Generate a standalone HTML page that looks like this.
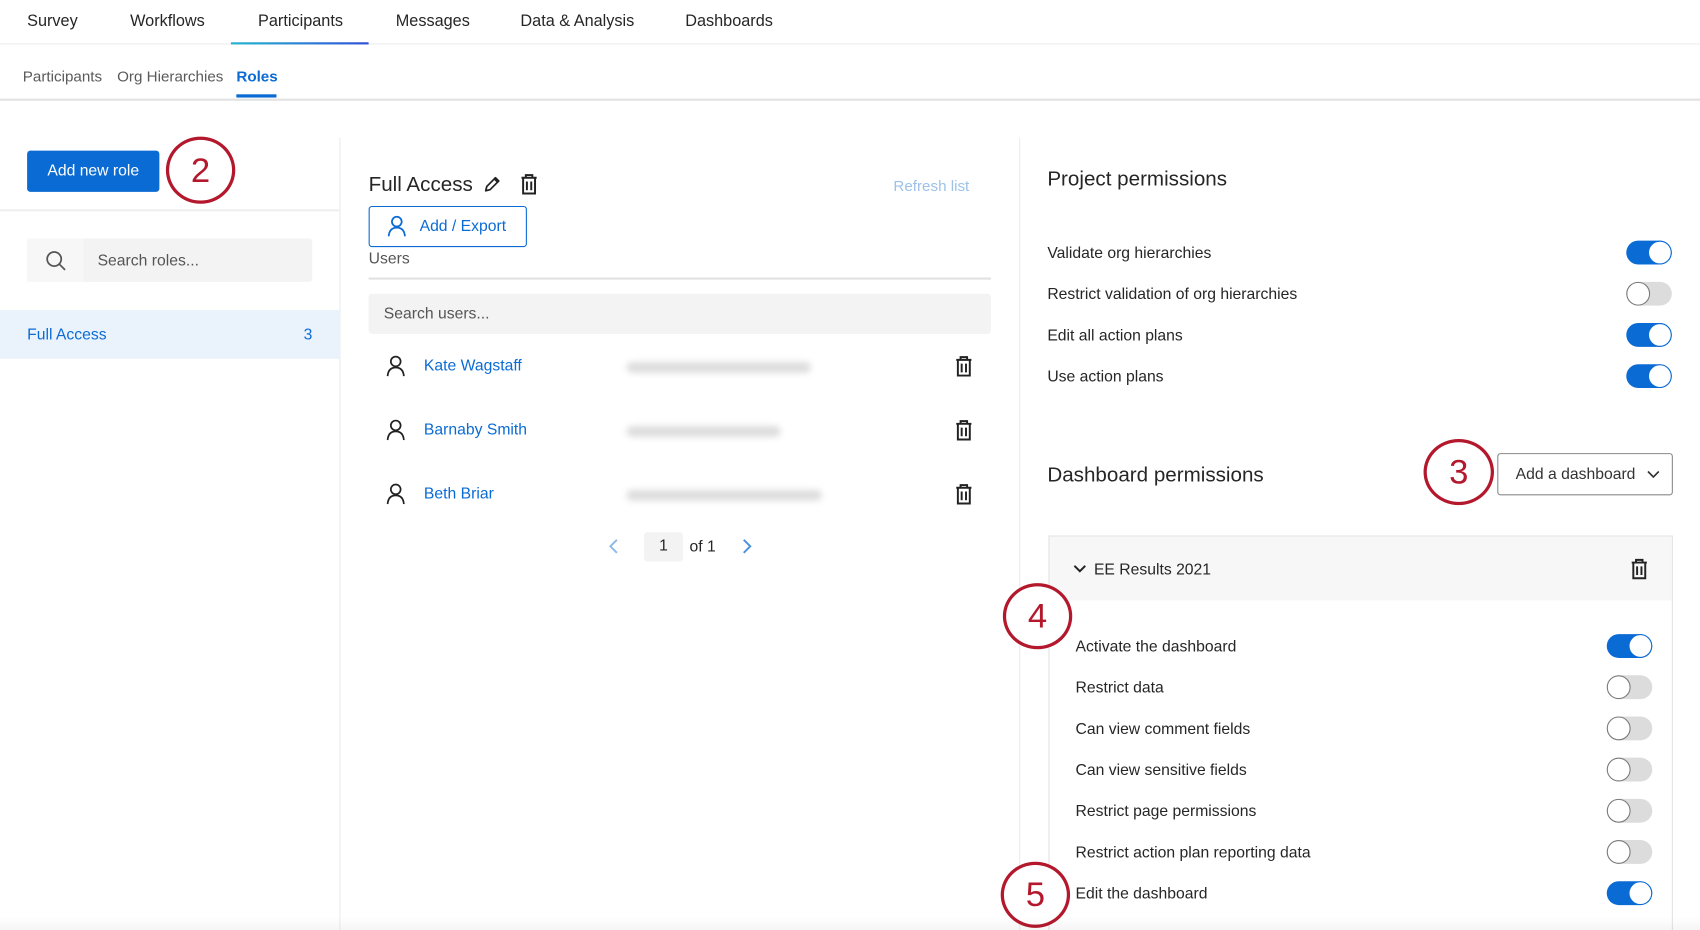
<!DOCTYPE html>
<html><head><meta charset="utf-8"><style>
*{margin:0;padding:0;box-sizing:border-box}
html,body{width:1700px;height:930px;overflow:hidden;background:#fff}
#w{position:absolute;left:0;top:0;width:1568px;height:858px;overflow:hidden;transform:scale(1.08418,1.08392);transform-origin:0 0;font-family:"Liberation Sans",sans-serif;color:#262626;font-size:15px}
.a{position:absolute;white-space:nowrap}
.nav{top:11px;font-size:15px;color:#262626}
.sub{top:62px;font-size:14px;color:#5a5a5a}
.tg{position:absolute;width:42px;height:22px;border-radius:11px;background:#dcdcdc}
.tg::after{content:"";position:absolute;top:0;left:0;width:22px;height:22px;border-radius:50%;background:#fff;border:1.5px solid #7a7a7a;box-sizing:border-box}
.tg.on{background:#0b6bd4}
.tg.on::after{left:20px;border-color:#0b6bd4}
.lbl{font-size:14.5px;color:#262626;margin-top:1px}
.circ{position:absolute;border:3px solid #b3182c;border-radius:50%;color:#b3182c;font-size:32px;text-align:center;background:#fff}
.blue{color:#0b6bd4}
.blur{position:absolute;height:10px;border-radius:5px;background:#ddd;filter:blur(3px)}
</style></head><body><div id="w">
<div class="a nav" style="left:25px">Survey</div>
<div class="a nav" style="left:120px">Workflows</div>
<div class="a nav" style="left:238px">Participants</div>
<div class="a nav" style="left:365px">Messages</div>
<div class="a nav" style="left:480px">Data &amp; Analysis</div>
<div class="a nav" style="left:632px">Dashboards</div>
<div class="a" style="left:0;top:40px;width:1568px;height:1px;background:#ececec"></div>
<div class="a" style="left:213px;top:39px;width:127px;height:2px;background:linear-gradient(90deg,#22b5d0,#2f4fd8)"></div>
<div class="a sub" style="left:21px">Participants</div>
<div class="a sub" style="left:108px">Org Hierarchies</div>
<div class="a sub" style="left:218px;color:#0b6bd4;font-weight:bold">Roles</div>
<div class="a" style="left:218px;top:87px;width:37px;height:3px;background:#0b6bd4"></div>
<div class="a" style="left:0;top:91px;width:1568px;height:2px;background:#e2e2e2"></div>

<!-- left -->
<div class="a" style="left:313px;top:127px;width:1px;height:731px;background:#ececec"></div>
<div class="a" style="left:25px;top:139px;width:122px;height:38px;background:#0b6bd4;border-radius:3px;color:#fff;font-size:14.5px;line-height:38px;text-align:center">Add new role</div>
<div class="circ" style="left:153px;top:126px;width:64px;height:62px;line-height:56px">2</div>
<div class="a" style="left:0;top:193px;width:313px;height:2px;background:#efefef"></div>
<div class="a" style="left:25px;top:220px;width:263px;height:40px;background:#f3f3f3;border-radius:3px"></div>
<div class="a" style="left:25px;top:220px;width:52px;height:40px;background:#f7f7f7"></div>
<svg class="a" style="left:41px;top:230px" width="22" height="22" viewBox="0 0 22 22"><circle cx="9" cy="9" r="6.5" fill="none" stroke="#555" stroke-width="1.6"/><line x1="13.5" y1="13.5" x2="19" y2="19" stroke="#555" stroke-width="1.6"/></svg>
<div class="a" style="left:90px;top:233px;color:#555;font-size:14.5px">Search roles...</div>
<div class="a" style="left:0;top:286px;width:313px;height:45px;background:#eaf3fc"></div>
<div class="a blue" style="left:25px;top:301px;font-size:14.5px">Full Access</div>
<div class="a blue" style="left:280px;top:301px;font-size:14.5px">3</div>

<!-- middle -->
<div class="a" style="left:340px;top:160px;font-size:19px">Full Access</div>
<svg class="a" style="left:445px;top:161px" width="18" height="18" viewBox="0 0 18 18"><path d="M3 15 L4 11 L12 3 L15 6 L7 14 Z M11 4 L14 7" fill="none" stroke="#222" stroke-width="1.6" stroke-linejoin="round"/></svg>
<svg class="a" style="left:479px;top:159px" width="18" height="22" viewBox="0 0 18 22"><path d="M2 5 H16 M6 5 V2.5 H12 V5 M3.5 5 V19.5 H14.5 V5 M7 8.5 V16.5 M11 8.5 V16.5" fill="none" stroke="#222" stroke-width="1.8"/></svg>
<div class="a" style="left:824px;top:163px;color:#9cc2ea;font-size:14px">Refresh list</div>
<div class="a" style="left:340px;top:190px;width:146px;height:38px;border:1.5px solid #0b6bd4;border-radius:3px"></div>
<svg class="a" style="left:356px;top:198px" width="20" height="22" viewBox="0 0 20 22"><circle cx="10" cy="6.5" r="4.5" fill="none" stroke="#0b6bd4" stroke-width="1.6"/><path d="M2.5 20 C3 14 6 12 10 12 C14 12 17 14 17.5 20" fill="none" stroke="#0b6bd4" stroke-width="1.6"/></svg>
<div class="a blue" style="left:387px;top:201px;font-size:14.5px">Add / Export</div>
<div class="a" style="left:340px;top:231px;color:#555;font-size:14.5px">Users</div>
<div class="a" style="left:340px;top:256px;width:574px;height:2px;background:#e2e2e2"></div>
<div class="a" style="left:340px;top:271px;width:574px;height:37px;background:#f3f3f3;border-radius:3px"></div>
<div class="a" style="left:354px;top:282px;color:#555;font-size:14.5px">Search users...</div>

<svg class="a" style="left:355px;top:327px" width="20" height="22" viewBox="0 0 20 22"><circle cx="10" cy="6.5" r="4.5" fill="none" stroke="#222" stroke-width="1.6"/><path d="M2.5 20 C3 14 6 12 10 12 C14 12 17 14 17.5 20" fill="none" stroke="#222" stroke-width="1.6"/></svg>
<div class="a blue" style="left:391px;top:330px;font-size:14.5px">Kate Wagstaff</div>
<div class="blur" style="left:578px;top:334px;width:170px"></div>
<svg class="a" style="left:880px;top:327px" width="18" height="22" viewBox="0 0 18 22"><path d="M2 5 H16 M6 5 V2.5 H12 V5 M3.5 5 V19.5 H14.5 V5 M7 8.5 V16.5 M11 8.5 V16.5" fill="none" stroke="#222" stroke-width="1.8"/></svg>

<svg class="a" style="left:355px;top:386px" width="20" height="22" viewBox="0 0 20 22"><circle cx="10" cy="6.5" r="4.5" fill="none" stroke="#222" stroke-width="1.6"/><path d="M2.5 20 C3 14 6 12 10 12 C14 12 17 14 17.5 20" fill="none" stroke="#222" stroke-width="1.6"/></svg>
<div class="a blue" style="left:391px;top:389px;font-size:14.5px">Barnaby Smith</div>
<div class="blur" style="left:578px;top:393px;width:142px"></div>
<svg class="a" style="left:880px;top:386px" width="18" height="22" viewBox="0 0 18 22"><path d="M2 5 H16 M6 5 V2.5 H12 V5 M3.5 5 V19.5 H14.5 V5 M7 8.5 V16.5 M11 8.5 V16.5" fill="none" stroke="#222" stroke-width="1.8"/></svg>

<svg class="a" style="left:355px;top:445px" width="20" height="22" viewBox="0 0 20 22"><circle cx="10" cy="6.5" r="4.5" fill="none" stroke="#222" stroke-width="1.6"/><path d="M2.5 20 C3 14 6 12 10 12 C14 12 17 14 17.5 20" fill="none" stroke="#222" stroke-width="1.6"/></svg>
<div class="a blue" style="left:391px;top:448px;font-size:14.5px">Beth Briar</div>
<div class="blur" style="left:578px;top:452px;width:180px"></div>
<svg class="a" style="left:880px;top:445px" width="18" height="22" viewBox="0 0 18 22"><path d="M2 5 H16 M6 5 V2.5 H12 V5 M3.5 5 V19.5 H14.5 V5 M7 8.5 V16.5 M11 8.5 V16.5" fill="none" stroke="#222" stroke-width="1.8"/></svg>

<svg class="a" style="left:559px;top:496px" width="14" height="16" viewBox="0 0 14 16"><path d="M10 2 L4 8 L10 14" fill="none" stroke="#8db9e8" stroke-width="1.8"/></svg>
<div class="a" style="left:594px;top:491px;width:36px;height:27px;background:#f3f3f3;border-radius:3px;text-align:center;line-height:27px;font-size:14.5px">1</div>
<div class="a" style="left:636px;top:497px;font-size:14.5px">of 1</div>
<svg class="a" style="left:682px;top:496px" width="14" height="16" viewBox="0 0 14 16"><path d="M4 2 L10 8 L4 14" fill="none" stroke="#4b91de" stroke-width="1.8"/></svg>

<!-- right -->
<div class="a" style="left:940px;top:127px;width:1px;height:731px;background:#ececec"></div>
<div class="a" style="left:966px;top:155px;font-size:19px">Project permissions</div>
<div class="a lbl" style="left:966px;top:225px">Validate org hierarchies</div><div class="tg on" style="left:1500px;top:222px"></div>
<div class="a lbl" style="left:966px;top:263px">Restrict validation of org hierarchies</div><div class="tg" style="left:1500px;top:260px"></div>
<div class="a lbl" style="left:966px;top:301px">Edit all action plans</div><div class="tg on" style="left:1500px;top:298px"></div>
<div class="a lbl" style="left:966px;top:339px">Use action plans</div><div class="tg on" style="left:1500px;top:336px"></div>

<div class="a" style="left:966px;top:428px;font-size:19px">Dashboard permissions</div>
<div class="circ" style="left:1313px;top:405px;width:65px;height:61px;line-height:55px">3</div>
<div class="a" style="left:1381px;top:418px;width:162px;height:39px;border:1px solid #8a8a8a;border-radius:3px"></div>
<div class="a" style="left:1398px;top:430px;font-size:14.5px;color:#333">Add a dashboard</div>
<svg class="a" style="left:1518px;top:432px" width="14" height="12" viewBox="0 0 14 12"><path d="M2 3 L7 8 L12 3" fill="none" stroke="#333" stroke-width="1.5"/></svg>

<div class="a" style="left:967px;top:494px;width:576px;height:380px;border:1px solid #e3e3e3"></div>
<div class="a" style="left:968px;top:495px;width:574px;height:59px;background:#f7f7f7"></div>
<svg class="a" style="left:989px;top:519px" width="14" height="12" viewBox="0 0 14 12"><path d="M2 3 L7 8 L12 3" fill="none" stroke="#222" stroke-width="1.8"/></svg>
<div class="a" style="left:1009px;top:518px;font-size:14.5px">EE Results 2021</div>
<svg class="a" style="left:1503px;top:514px" width="18" height="22" viewBox="0 0 18 22"><path d="M2 5 H16 M6 5 V2.5 H12 V5 M3.5 5 V19.5 H14.5 V5 M7 8.5 V16.5 M11 8.5 V16.5" fill="none" stroke="#222" stroke-width="1.8"/></svg>

<div class="a lbl" style="left:992px;top:588px">Activate the dashboard</div><div class="tg on" style="left:1482px;top:585px"></div>
<div class="a lbl" style="left:992px;top:626px">Restrict data</div><div class="tg" style="left:1482px;top:623px"></div>
<div class="a lbl" style="left:992px;top:664px">Can view comment fields</div><div class="tg" style="left:1482px;top:661px"></div>
<div class="a lbl" style="left:992px;top:702px">Can view sensitive fields</div><div class="tg" style="left:1482px;top:699px"></div>
<div class="a lbl" style="left:992px;top:740px">Restrict page permissions</div><div class="tg" style="left:1482px;top:737px"></div>
<div class="a lbl" style="left:992px;top:778px">Restrict action plan reporting data</div><div class="tg" style="left:1482px;top:775px"></div>
<div class="a lbl" style="left:992px;top:816px">Edit the dashboard</div><div class="tg on" style="left:1482px;top:813px"></div>

<div class="circ" style="left:925px;top:538px;width:64px;height:61px;line-height:55px">4</div>
<div class="circ" style="left:923px;top:795px;width:64px;height:61px;line-height:55px">5</div>
<div class="a" style="left:0;top:846px;width:1568px;height:12px;background:linear-gradient(rgba(255,255,255,0),rgba(0,0,0,0.04))"></div>
</div></body></html>
